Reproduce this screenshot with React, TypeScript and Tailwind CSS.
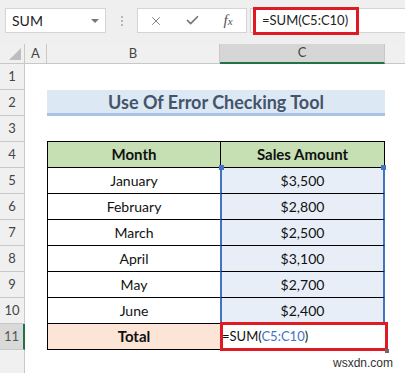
import { X, Check } from "lucide-react";

const months = [
  { m: "January", v: "$3,500" },
  { m: "February", v: "$2,800" },
  { m: "March", v: "$2,500" },
  { m: "April", v: "$3,100" },
  { m: "May", v: "$2,700" },
  { m: "June", v: "$2,400" },
];

function RowHead({ n, active }: { n?: number; active?: boolean }) {
  return (
    <div
      className={
        active
          ? "w-[25px] shrink-0 flex items-center justify-center border-b border-b-[#c8c8c8] border-r-2 border-r-[#217346] bg-[#d9d9d9] text-[13px] text-[#555]"
          : "w-[25px] shrink-0 flex items-center justify-center border-b border-r border-[#c8c8c8] bg-[#f0f0f0] text-[13px] text-[#444]"
      }
    >
      {n}
    </div>
  );
}

export default function App() {
  return (
    <div className="w-[405px] h-[373px] overflow-hidden bg-white font-[Lato,'Liberation_Sans',sans-serif] text-[#111]">
      {/* Formula bar */}
      <div className="h-[44px] bg-[#efefef] flex items-start pt-[8px]">
        <div className="ml-[5px] w-[101px] h-[25px] bg-white border border-[#d4d4d4] flex items-center justify-between pl-[6px] pr-[6px]">
          <span className="text-[14px] text-[#222]">SUM</span>
          <span className="w-0 h-0 border-x-[4px] border-x-transparent border-t-[4px] border-t-[#777]" />
        </div>
        <div className="w-[31px] h-[25px] flex flex-col items-center justify-center gap-[2px]">
          <span className="w-[2px] h-[2px] bg-[#b5b5b5]" />
          <span className="w-[2px] h-[2px] bg-[#b5b5b5]" />
          <span className="w-[2px] h-[2px] bg-[#b5b5b5]" />
        </div>
        <div className="w-[110px] h-[25px] bg-white border border-[#d4d4d4] grid grid-cols-3 items-center justify-items-center">
          <X size={14} strokeWidth={1.6} color="#777" />
          <Check size={15} strokeWidth={2.8} color="#777" />
          <span className="font-['Liberation_Serif',serif] italic text-[15px] text-[#555] leading-none">
            f<span className="text-[11px]">x</span>
          </span>
        </div>
        <div className="relative ml-[3px] flex-1 h-[25px] bg-white border-y border-l border-[#d4d4d4] flex items-center pl-[11px]">
          <span className="text-[13px] text-[#222]">=SUM(C5:C10)</span>
          <div className="absolute left-[2px] top-[-2px] w-[106px] h-[28px] border-[3px] border-[#e01a22]" />
        </div>
      </div>

      {/* Column headers */}
      <div className="flex h-[20px] bg-[#f0f0f0] text-[13px] text-[#444]">
        <div className="relative w-[25px] shrink-0 border-r border-b border-[#c8c8c8]">
          <span className="absolute right-[3px] bottom-[3px] w-0 h-0 border-l-[12px] border-l-transparent border-b-[12px] border-b-[#bdbdbd]" />
        </div>
        <div className="w-[22px] shrink-0 border-r border-b border-[#c8c8c8] flex items-center justify-center">A</div>
        <div className="w-[173px] shrink-0 border-r border-b border-[#c8c8c8] flex items-center justify-center">B</div>
        <div className="w-[165px] shrink-0 bg-[#d6d6d6] border-r border-r-[#c8c8c8] border-b-2 border-b-[#217346] flex items-center justify-center">C</div>
        <div className="flex-1 border-b border-[#c8c8c8]" />
      </div>

      {/* Rows 1-3 */}
      <div className="flex h-[26px]">
        <RowHead n={1} />
      </div>
      <div className="flex h-[26px]">
        <RowHead n={2} />
        <div className="w-[22px] shrink-0" />
        <div className="w-[338px] shrink-0 bg-[#dde8f5] border-b-[3px] border-b-[#a9c3e4] flex items-center justify-center text-[18px] font-bold text-[#44546a] leading-none">
          Use Of Error Checking Tool
        </div>
      </div>
      <div className="flex h-[26px]">
        <RowHead n={3} />
        <div className="w-[22px] shrink-0" />
        <div className="w-[173px] shrink-0 border-b border-black" />
        <div className="w-[165px] shrink-0 border-b border-black" />
      </div>

      {/* Header row */}
      <div className="flex h-[26px] text-[15px]">
        <RowHead n={4} />
        <div className="w-[22px] shrink-0" />
        <div className="w-[173px] shrink-0 bg-[#c6e0b4] border-l border-b border-black flex items-center justify-center font-bold">
          Month
        </div>
        <div className="w-[165px] shrink-0 bg-[#c6e0b4] border-x border-b border-black flex items-center justify-center font-bold">
          Sales Amount
        </div>
      </div>

      {months.map((r, i) => (
        <div key={r.m} className="flex h-[26px] text-[14px]">
          <RowHead n={i + 5} />
          <div className="w-[22px] shrink-0" />
          <div className="w-[173px] shrink-0 border-l border-b border-black flex items-center justify-center">{r.m}</div>
          <div className="relative w-[165px] shrink-0 bg-[#e8eef8] border-b border-b-black border-x-2 border-x-[#4472c4] flex items-center justify-center">
            {r.v}
            {i === 0 && (
              <>
                <span className="absolute -top-[3px] -left-[3px] w-[5px] h-[5px] bg-[#4472c4]" />
                <span className="absolute -top-[3px] -right-[3px] w-[5px] h-[5px] bg-[#4472c4]" />
              </>
            )}
          </div>
        </div>
      ))}

      {/* Total row */}
      <div className="flex h-[26px] text-[15px]">
        <RowHead n={11} active />
        <div className="w-[22px] shrink-0" />
        <div className="w-[173px] shrink-0 bg-[#fce4d6] border-l border-b border-black flex items-center justify-center font-bold">
          Total
        </div>
        <div className="relative w-[165px] shrink-0 flex items-center pl-[2px] text-[13px]">
          <span>
            =SUM(<span className="text-[#4472c4]">C5:C10</span>)
          </span>
          <div className="absolute left-0 top-[-2px] right-[-3px] bottom-[-1px] border-[3px] border-[#e01a22]" />
          <span className="absolute right-[-4px] bottom-[-3px] w-[4px] h-[4px] bg-[#6b6b6b]" />
        </div>
      </div>

      {/* Row 12 */}
      <div className="flex h-[26px]">
        <RowHead />
        <div className="flex-1 flex justify-end items-start pt-[4px] pr-[12px]">
          <span className="text-[12px] text-[#333] font-['Liberation_Sans',sans-serif]">wsxdn.com</span>
        </div>
      </div>
    </div>
  );
}
